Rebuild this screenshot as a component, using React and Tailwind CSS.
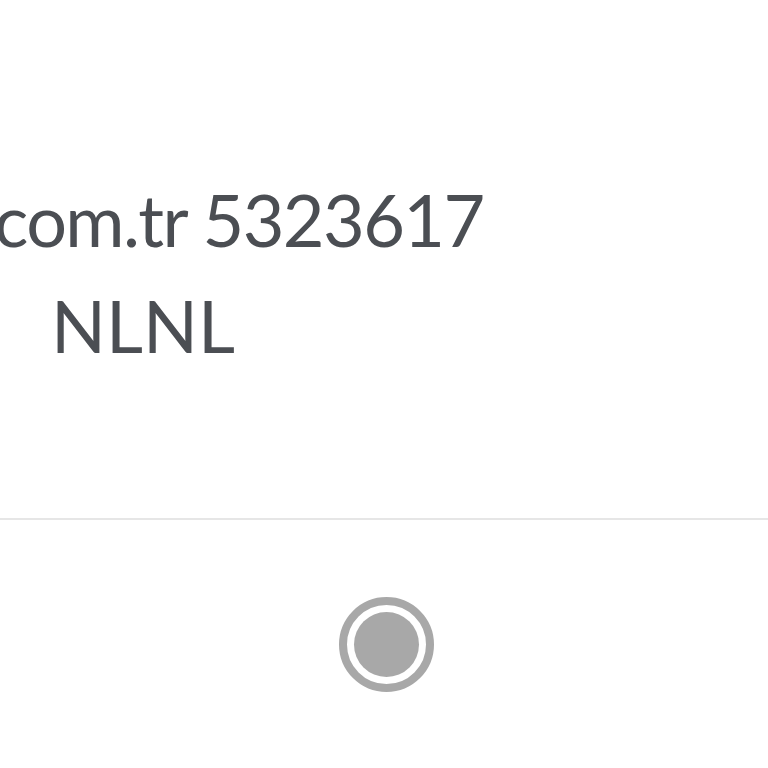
const App = () => (
  <div className="w-[768px] h-[768px] overflow-hidden bg-white font-['Lato',sans-serif] text-[#4b4e53] flex flex-col">
    <div className="h-[518px] shrink-0 pt-[166px] overflow-hidden">
      <p className="whitespace-nowrap text-[72px] leading-[106px] tracking-[-1.6px] ml-[-6px]">com.tr 5323617</p>
      <p className="whitespace-nowrap text-[72px] leading-[106px] pl-[51px]">NLNL</p>
    </div>
    <div className="h-[2px] shrink-0 bg-[#e6e6e6]" />
    <div className="flex justify-center pt-[77px]">
      <div className="ml-[4px] w-[95px] h-[95px] rounded-full border-[8px] border-[#a8a8a8] flex items-center justify-center">
        <div className="w-[65px] h-[65px] rounded-full bg-[#a8a8a8]" />
      </div>
    </div>
  </div>
);

export default App;
